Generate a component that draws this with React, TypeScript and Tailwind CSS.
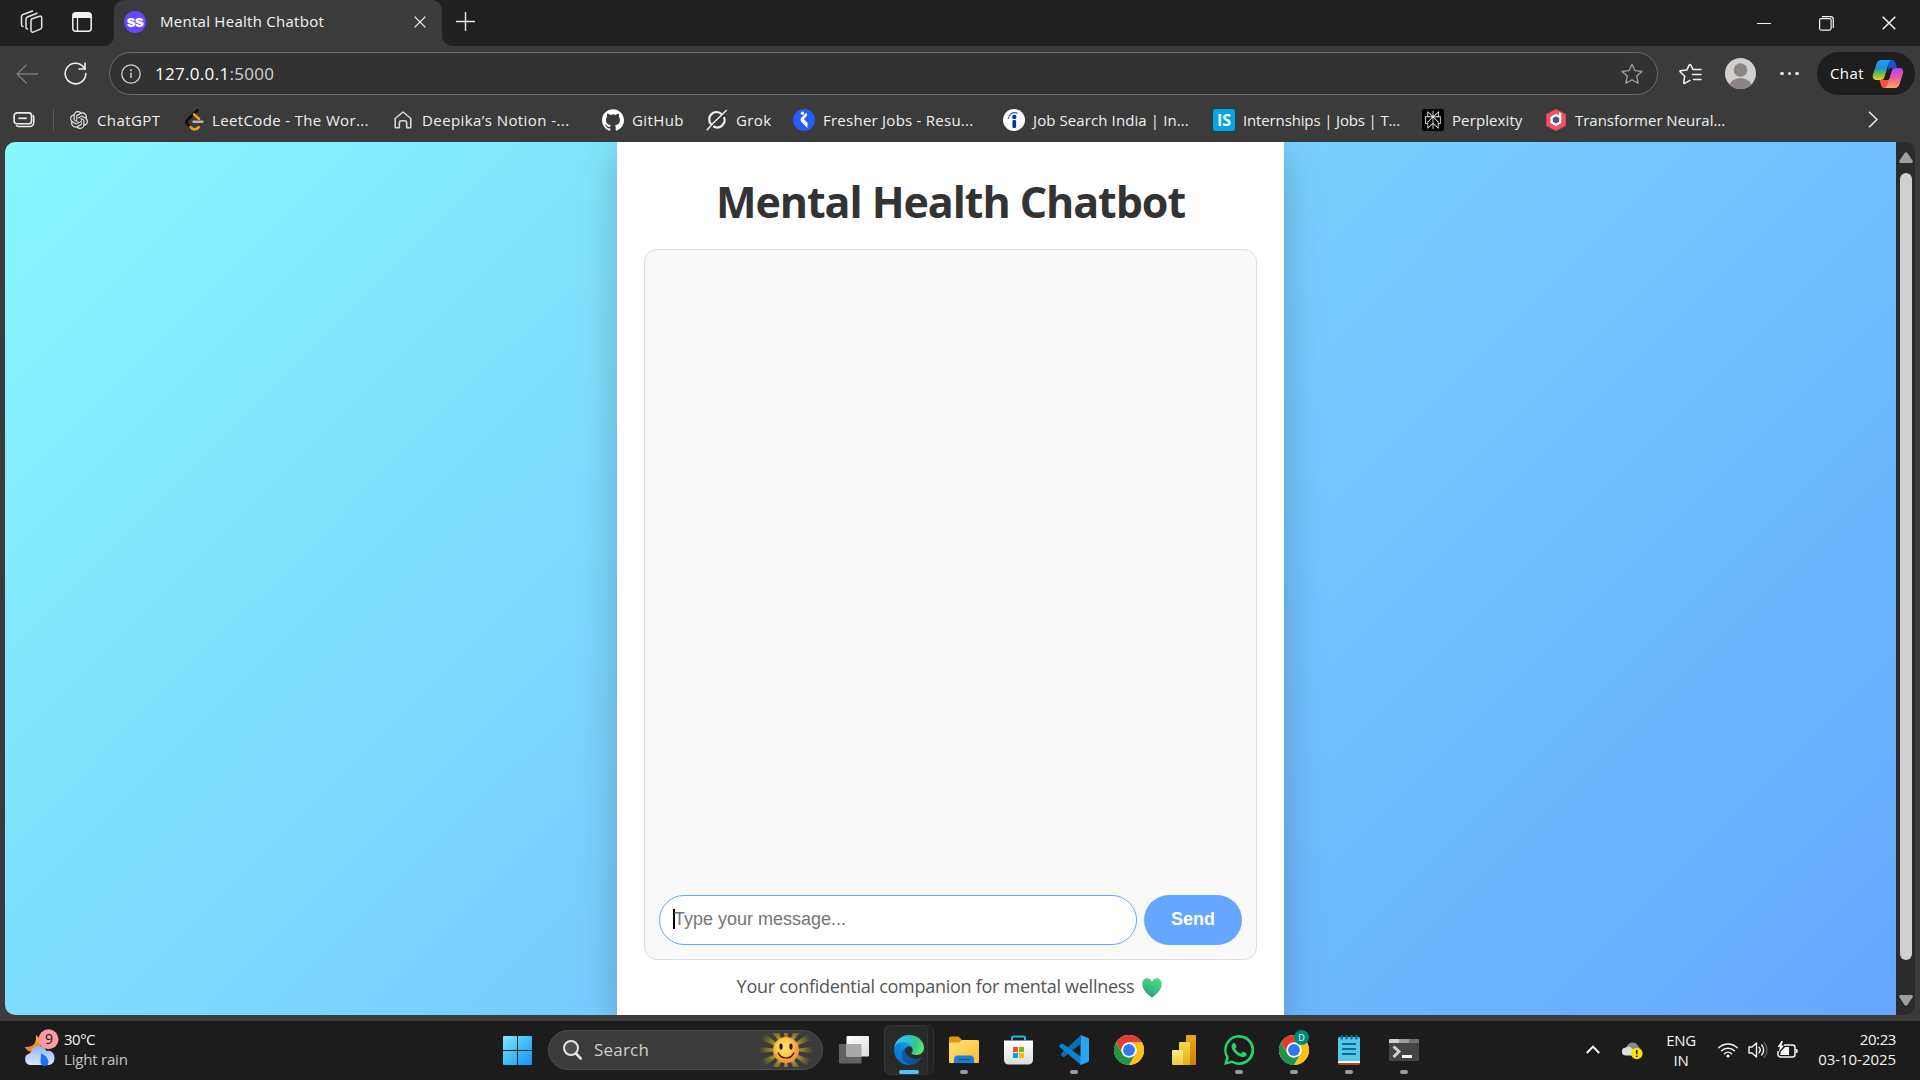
import React from "react";
import { SiOpenai, SiGithub, SiPerplexity } from "react-icons/si";

/* ---------- browser icons ---------- */

const WorkspacesIcon = () => (
  <svg width="24" height="24" viewBox="0 0 24 24" fill="none" stroke="#e6e6e6" strokeWidth="1.5" strokeLinejoin="round" strokeLinecap="round">
    <path d="M11.500 9 19.500 6.200a1.600 1.600 0 0 1 2.200 1.500v9.600a2 2 0 0 1-1.300 1.800l-7.200 3a1.600 1.600 0 0 1-2.200-1.500V11a2 2 0 0 1 .5-2z" />
    <path d="M7.500 19a1.800 1.800 0 0 1-1.500-1.800V9a2.200 2.200 0 0 1 1.500-2L17 3.200" />
    <path d="M3 16.500a1.800 1.800 0 0 1-1.500-1.800V6.500a2.200 2.200 0 0 1 1.500-2L12.500 1" />
  </svg>
);

const VerticalTabsIcon = () => (
  <svg width="20" height="20" viewBox="0 0 20 20" fill="none">
    <rect x=".8" y=".8" width="18.400" height="18.400" rx="3" stroke="#f2f2f2" strokeWidth="1.500" />
    <path d="M1 4a3 3 0 0 1 3-3h12a3 3 0 0 1 3 3v2H1z" fill="#f2f2f2" />
    <path d="M5.500 6v13" stroke="#f2f2f2" strokeWidth="1.300" />
  </svg>
);

const CloseIcon = ({ size }: { size: number }) => (
  <svg width={size} height={size} viewBox="0 0 14 14" fill="none" stroke="#f2f2f2" strokeWidth="1.500">
    <path d="M.7.7l12.600 12.600M13.300.7.7 13.300" />
  </svg>
);

const PlusIcon = () => (
  <svg width="19" height="19" viewBox="0 0 19 19" stroke="#e8e8e8" strokeWidth="1.400">
    <path d="M9.500 0v19M0 9.500h19" />
  </svg>
);

const RestoreIcon = () => (
  <svg width="15" height="15" viewBox="0 0 15 15" fill="none" stroke="#f2f2f2" strokeWidth="1.200">
    <rect x=".6" y="2.600" width="11.500" height="11.500" rx="1.500" />
    <path d="M3 .7h8.500a2.800 2.800 0 0 1 2.800 2.800V12" />
  </svg>
);

const BackIcon = () => (
  <svg width="22" height="20" viewBox="0 0 22 20" fill="none" stroke="#7a7a7a" strokeWidth="1.500">
    <path d="M22 10H1M10.500.7 1 10l9.500 9.300" />
  </svg>
);

const ReloadIcon = () => (
  <svg width="23" height="23" viewBox="0 0 23 23" fill="none" stroke="#f0f0f0" strokeWidth="1.600" strokeLinecap="round" strokeLinejoin="round">
    <path d="M21.800 11.500A10.300 10.300 0 1 1 19.700 5.300L21 7" />
    <path d="M21 1v6h-6" />
  </svg>
);

const InfoIcon = () => (
  <svg width="20" height="20" viewBox="0 0 20 20" fill="none" stroke="#d0d0d0">
    <circle cx="10" cy="10" r="9.200" strokeWidth="1.300" />
    <path d="M10 8.800v5.200" strokeWidth="1.500" />
    <circle cx="10" cy="6.200" r="1" fill="#d0d0d0" stroke="none" />
  </svg>
);

const StarIcon = () => (
  <svg width="22" height="22" viewBox="0 0 22 22" fill="none" stroke="#a0a0a0" strokeWidth="1.300" strokeLinejoin="round">
    <path d="M11 1.200l2.900 6.400 7 .8-5.200 4.700 1.400 7.100-6.100-3.500-6.100 3.500 1.400-7.100L1.100 8.400l7-.8z" />
  </svg>
);

const FavoritesIcon = () => (
  <svg width="23" height="22" viewBox="0 0 23 22" fill="none" stroke="#f2f2f2" strokeWidth="1.500" strokeLinejoin="round" strokeLinecap="round">
    <path d="M14 6.500 11.700 1.900a.8.8 0 0 0-1.400 0L7.900 6.900l-6.500.9a.6.6 0 0 0-.3 1L5.700 13.200 4.700 19.700a.7.7 0 0 0 1 .7l5.300-3" />
    <path d="M14.500 6.500h7.500M13.500 11.500h8.500M14.500 16.500h7.500" />
  </svg>
);

const AvatarIcon = () => (
  <svg width="31" height="31" viewBox="0 0 31 31">
    <clipPath id="avatarClip"><circle cx="15.500" cy="15.500" r="15.500" /></clipPath>
    <g clipPath="url(#avatarClip)">
      <rect width="31" height="31" fill="#d2d0ce" />
      <circle cx="15.500" cy="12" r="6.800" fill="#8a8582" />
      <ellipse cx="15.500" cy="29" rx="11.500" ry="9" fill="#8a8582" />
    </g>
  </svg>
);

const CopilotIcon = () => (
  <svg width="32" height="30" viewBox="0 0 32 30">
    <defs>
      <linearGradient id="cpA" x1="0" y1="0" x2="0" y2="1">
        <stop offset="0" stopColor="#1fa0f5" /><stop offset=".4" stopColor="#1d8fd8" /><stop offset=".7" stopColor="#6cbf4a" /><stop offset="1" stopColor="#f7c81e" />
      </linearGradient>
      <linearGradient id="cpB" x1="0" y1="0" x2="0" y2="1">
        <stop offset="0" stopColor="#a14be8" /><stop offset=".5" stopColor="#ee5a9b" /><stop offset="1" stopColor="#ffa95e" />
      </linearGradient>
    </defs>
    <path d="M16 1h4.500c1.700 0 2.500 1.200 3 3l1.500 5h-5c-2 0-3 1-3.600 3z" fill="#1a4fd0" />
    <path d="M15 29h-3c-1.700 0-2.500-1.200-3-3L7.500 21H13c2 0 3-1 3.500-3l2 2z" fill="#f4553a" />
    <path d="M9 1h11c-2 0-2.800 1.500-3.400 3.500L12.500 18c-.7 2-1.700 3-3.500 3H4.500C1.500 21 0 18.500 1 15.500L4.600 4.500C5.300 2.300 6.700 1 9 1z" fill="url(#cpA)" />
    <path d="M23 29H12c2 0 2.800-1.500 3.400-3.500L19.500 12c.7-2 1.700-3 3.500-3h4.500c3 0 4.500 2.500 3.500 5.500l-3.600 11C26.700 27.700 25.300 29 23 29z" fill="url(#cpB)" />
    <path d="M17 10h3.200l-3 9.800c-.3.800-.9 1.200-1.700 1.200H12c.8-.6 1.200-1.500 1.500-2.500z" fill="#1e1e1e" />
  </svg>
);

const CollectionIcon = () => (
  <svg width="22" height="16" viewBox="0 0 23 17" fill="none" stroke="#ececec">
    <rect x="1" y="1" width="18.500" height="11.500" rx="3" strokeWidth="1.800" />
    <path d="M5.500 6.700h9" strokeWidth="1.800" />
    <path d="M21 3.200c.7.800.9 1.700.9 3v4.300c0 3-1.600 5-5 5H6c-1.500 0-2.300-.5-3-1.300" strokeWidth="1.600" />
  </svg>
);

const LeetCodeIcon = () => (
  <svg width="19" height="22" viewBox="0 0 19 22" fill="none" strokeLinecap="round">
    <path d="M12.300 1.300 2.500 11c-1.300 1.300-1.300 2.800 0 4.100l3 3" stroke="#0a0a0a" strokeWidth="2.600" />
    <path d="M9 5.500l5 4.300M5.500 18c2.300 3 5.800 3.200 8.300.2" stroke="#f5a019" strokeWidth="2.600" />
    <path d="M8.500 12.800h9" stroke="#b5b5b5" strokeWidth="2.400" />
  </svg>
);

const HomeIcon = () => (
  <svg width="18" height="18" viewBox="0 0 18 18" fill="none" stroke="#d6d6d6" strokeWidth="1.600" strokeLinejoin="round">
    <path d="M1.200 7.500 9 1l7.800 6.500V16a.8.8 0 0 1-.8.8h-3.300V12c0-1.500-1-2.300-2.200-2.300h-3C6.300 9.700 5.300 10.500 5.300 12v4.800H2a.8.8 0 0 1-.8-.8z" />
  </svg>
);

const GrokIcon = () => (
  <svg width="22" height="22" viewBox="0 0 22 22" fill="none" stroke="#eeeeee">
    <path d="M15.800 5.200A7.300 7.300 0 0 0 5.300 15.500M18 8.200A7.400 7.400 0 0 1 7.300 17.300" strokeWidth="2.200" />
    <path d="M.8 21.300 7.300 14 20.800 1" strokeWidth="1.400" />
  </svg>
);

const FresherIcon = () => (
  <svg width="22" height="22" viewBox="0 0 22 22">
    <circle cx="11" cy="11" r="11" fill="#275df5" />
    <circle cx="9.500" cy="4.200" r="1.700" fill="#fff" />
    <path d="M13.800 3.500v3.300L11 10.200l3.500 3.500v5.300L9.500 14C7 11.300 7 10 9 8z" fill="#fff" />
  </svg>
);

const IndeedIcon = () => (
  <svg width="22" height="22" viewBox="0 0 22 22">
    <circle cx="11" cy="11" r="11" fill="#fff" />
    <circle cx="11.300" cy="7.900" r="2.200" fill="#003a9b" />
    <rect x="9.400" y="11" width="3.700" height="8" rx="1.300" fill="#003a9b" />
    <path d="M5 10c.7-5 5-7.600 9.800-5.800" fill="none" stroke="#2a5cc0" strokeWidth="1.100" />
  </svg>
);

const InternshalaIcon = () => (
  <span className="flex size-[22px] items-center justify-center rounded-[3px] bg-[#00a5ec] font-['Open_Sans',sans-serif] text-[16px] leading-none font-bold text-white">
    IS
  </span>
);

const PerplexityIcon = () => (
  <span className="flex size-[22px] items-center justify-center rounded-[2px] bg-black">
    <SiPerplexity className="size-[18px] text-[#e0e0e0]" />
  </span>
);

const HexagonIcon = () => (
  <svg width="20" height="22" viewBox="0 0 20 22">
    <path d="M10 0l9.800 5.300v11.400L10 22 .2 16.700V5.300z" fill="#f4505f" />
    <path d="M13 3.200l2.300 1v9.800L10 17.200l-5.500-3.200V8L10 4.800l3 1.600z" fill="#fff" />
    <path d="M10 7.300l3.200 1.800v3.700L10 14.600l-3.200-1.800V9.100z" fill="#3d5a80" />
  </svg>
);

/* ---------- taskbar icons ---------- */

const WeatherIcon = () => (
  <svg width="36" height="38" viewBox="0 0 36 38">
    <defs>
      <linearGradient id="moon" x1="0" y1="0" x2="0" y2="1"><stop offset="0" stopColor="#f0b72c" /><stop offset="1" stopColor="#ee7a1c" /></linearGradient>
      <linearGradient id="cloud" x1="0" y1="0" x2="0" y2="1"><stop offset="0" stopColor="#8fb2f5" /><stop offset="1" stopColor="#dce8fc" /></linearGradient>
    </defs>
    <path d="M12 6c.5 9-3 12.500-11.500 12C3 22 8 25 14 22c4-3 4-12-2-16z" fill="url(#moon)" />
    <path d="M6 36a6 6 0 0 1-1-11.500C6.500 24 7.500 22 8 20.500c2-3.500 5.500-4.500 8.500-3.500 3 .8 5 2.500 6 5 5-1 8 2.500 8 7s-3 7-6.500 7z" fill="url(#cloud)" />
    <path d="M17 24.500c5 2 7.500 5.500 7.500 9 0 2.500-2 3.500-4 3.500S16.500 35.500 16.500 33z" fill="#1677ee" />
    <circle cx="24.500" cy="10.300" r="10" fill="#ff99a4" />
  </svg>
);

const StartIcon = () => (
  <svg width="29" height="29" viewBox="0 0 29 29">
    <defs><linearGradient id="win" x1="0" y1="0" x2="1" y2="1"><stop offset="0" stopColor="#7deafd" /><stop offset=".5" stopColor="#42bdf8" /><stop offset="1" stopColor="#0f96f5" /></linearGradient></defs>
    <path fill="url(#win)" d="M1 0h13v14H0V1a1 1 0 0 1 1-1zM15 0h13a1 1 0 0 1 1 1v13H15zM0 15h14v14H1a1 1 0 0 1-1-1zM15 15h14v13a1 1 0 0 1-1 1H15z" />
  </svg>
);

const SearchIcon = () => (
  <svg width="19" height="20" viewBox="0 0 19 20" fill="none" stroke="#e6e6e6">
    <circle cx="8" cy="8" r="7" strokeWidth="2" fill="#4e4e4e" />
    <path d="M13 13.500l4.700 5" strokeWidth="2.600" strokeLinecap="round" />
  </svg>
);

const SunIcon = () => (
  <svg width="52" height="34" viewBox="0 0 52 34">
    <defs>
      <radialGradient id="sunRays" cx="26" cy="17" r="27" gradientUnits="userSpaceOnUse"><stop offset=".5" stopColor="#a88f2c" /><stop offset="1" stopColor="#a88f2c" stopOpacity="0" /></radialGradient>
      <radialGradient id="sunFace" cx=".45" cy=".4"><stop offset="0" stopColor="#ffe25a" /><stop offset=".6" stopColor="#ffcb4a" /><stop offset="1" stopColor="#f79440" /></radialGradient>
      <clipPath id="sunClip"><rect width="52" height="34" /></clipPath>
    </defs>
    <g clipPath="url(#sunClip)">
      <path fill="url(#sunRays)" d="M26 17L23 -9h6zM26 17L36 -7l6 4zM26 17L47 1l4 6zM26 17L52 14v6zM26 17L51 27l-4 6zM26 17L42 37l-6 4zM26 17L29 43h-6zM26 17L16 41l-6-4zM26 17L5 33l-4-6zM26 17L0 20v-6zM26 17L1 7l4-6zM26 17L10 -3l6-4z" />
      <circle cx="26" cy="17" r="13" fill="url(#sunFace)" />
      <ellipse cx="21" cy="13.500" rx="1.600" ry="3.100" fill="#1c1209" />
      <ellipse cx="31" cy="13.500" rx="1.600" ry="3.100" fill="#1c1209" />
      <path d="M18 19.500c3 7.300 13 7.300 16 0" fill="none" stroke="#1c1209" strokeWidth="1.200" />
    </g>
  </svg>
);

const TaskViewIcon = () => (
  <svg width="30" height="28" viewBox="0 0 30 28">
    <defs><linearGradient id="tv" x1="0" y1="0" x2="1" y2="1"><stop offset="0" stopColor="#fff" /><stop offset="1" stopColor="#dedede" /></linearGradient></defs>
    <rect x="0" y="8" width="22.500" height="19.500" rx="1" fill="#626262" />
    <rect x="7.500" y="0" width="22.500" height="20.500" rx="1" fill="url(#tv)" />
    <path d="M7.500 8h15v12.500h-15z" fill="#a9a9a9" />
  </svg>
);

const EdgeIcon = () => (
  <svg width="30" height="30" viewBox="0 0 256 256">
    <defs>
      <linearGradient id="eg1" x1="63" y1="177" x2="241" y2="177" gradientUnits="userSpaceOnUse"><stop offset="0" stopColor="#0c59a4" /><stop offset="1" stopColor="#114a8b" /></linearGradient>
      <linearGradient id="eg2" x1="157" y1="100" x2="46" y2="221" gradientUnits="userSpaceOnUse"><stop offset="0" stopColor="#1b9de2" /><stop offset=".16" stopColor="#1595df" /><stop offset=".67" stopColor="#0680d7" /><stop offset="1" stopColor="#0078d4" /></linearGradient>
      <radialGradient id="eg3" cx="26" cy="46" r="240" gradientUnits="userSpaceOnUse"><stop offset="0" stopColor="#35c1f1" /><stop offset=".35" stopColor="#2cc3d8" /><stop offset=".7" stopColor="#36c98a" /><stop offset="1" stopColor="#66eb6e" /></radialGradient>
    </defs>
    <path d="M231 190.500c-3.400 1.800-6.900 3.400-10.500 4.700a101.700 101.700 0 0 1-35.900 6.500c-47.300 0-88.500-32.500-88.500-74.300 0-11.400 6.400-21.900 16.400-27.300-42.800 1.800-53.800 46.400-53.800 72.500 0 74 68.100 81.400 82.800 81.400 7.900 0 19.800-2.300 27-4.600l1.300-.4a128.300 128.300 0 0 0 66.600-52.800 4 4 0 0 0-5.400-5.700z" fill="url(#eg1)" />
    <path d="M105.700 241.400a79.200 79.200 0 0 1-22.700-21.300 80.700 80.700 0 0 1 29.500-120c3.200-1.500 8.500-4.100 15.600-4a32.400 32.400 0 0 1 25.700 13 31.900 31.900 0 0 1 6.300 18.700c0-.2 24.500-79.600-80-79.600-43.900 0-80 41.700-80 78.200a130.200 130.200 0 0 0 12.100 56 128 128 0 0 0 156.400 67 75.500 75.500 0 0 1-62.800-8z" fill="url(#eg2)" />
    <path d="M152.300 148.900c-.8 1-3.300 2.500-3.300 5.700 0 2.600 1.700 5.100 4.700 7.200 14.400 10 41.500 8.700 41.600 8.700a59.600 59.600 0 0 0 30.300-8.300 61.400 61.400 0 0 0 30.400-52.900c.3-22.400-8-37.300-11.300-43.900C223.500 23.900 177.700 0 128 0A128 128 0 0 0 0 126.200c.5-36.500 36.800-66 80-66 3.500 0 23.500.3 42 10a72.600 72.600 0 0 1 30.900 29.300c6.100 10.600 7.200 24.100 7.200 29.500s-2.700 13.300-7.800 19.900z" fill="url(#eg3)" />
  </svg>
);

const ExplorerIcon = () => (
  <svg width="30" height="28" viewBox="0 0 30 28">
    <defs><linearGradient id="fold" x1="0" y1="0" x2="1" y2="1"><stop offset="0" stopColor="#ffe07a" /><stop offset="1" stopColor="#fcbf2e" /></linearGradient></defs>
    <path d="M0 2a1.500 1.500 0 0 1 1.500-1.500h8L13 4h15a2 2 0 0 1 2 2v4H0z" fill="#dc9a08" />
    <path d="M0 6.500h10L13 4h15.500A1.500 1.500 0 0 1 30 5.500V26a1 1 0 0 1-1 1H1a1 1 0 0 1-1-1z" fill="url(#fold)" />
    <path d="M5 27v-4a3.500 3.500 0 0 1 3.500-3.500h13A3.500 3.500 0 0 1 25 23v4z" fill="#1483d8" />
    <path d="M8.500 23.500h13" stroke="#0b4f8f" strokeWidth="1.200" />
  </svg>
);

const StoreIcon = () => (
  <svg width="29" height="30" viewBox="0 0 29 30">
    <defs><linearGradient id="bag" x1="0" y1="0" x2="0" y2="1"><stop offset="0" stopColor="#fff" /><stop offset="1" stopColor="#dcdcdc" /></linearGradient></defs>
    <path d="M0 5.500h29V25a4.500 4.500 0 0 1-4.500 4.500h-20A4.500 4.500 0 0 1 0 25z" fill="url(#bag)" />
    <path d="M8 6V3a1.500 1.500 0 0 1 1.500-1.500h10A1.500 1.500 0 0 1 21 3v3" fill="none" stroke="#21b3f1" strokeWidth="2" />
    <path d="M9 12h5v5H9z" fill="#f25022" /><path d="M15 12h5v5h-5z" fill="#7fba00" />
    <path d="M9 18h5v5H9z" fill="#00a4ef" /><path d="M15 18h5v5h-5z" fill="#ffb900" />
  </svg>
);

const VSCodeIcon = () => (
  <svg width="30" height="30" viewBox="0 0 30 30">
    <path d="M22 0 3.300 17.300a1.300 1.300 0 0 0 0 2l1.500 1.400c.5.400 1.100.4 1.600.1L22.500 8z" fill="#0f6fb5" transform="translate(-1 1)" />
    <path d="M22 30 .8 12.200a1.300 1.300 0 0 1 0-2l1.500-1.400c.5-.4 1.100-.4 1.600-.1L22.500 22z" fill="#0a84d0" />
    <path d="M21.500 0 29 3a1.700 1.700 0 0 1 1 1.600v20.800a1.700 1.700 0 0 1-1 1.600l-7.500 3z" fill="#27a4f2" />
  </svg>
);

const ChromeIcon = () => (
  <svg width="30" height="30" viewBox="0 0 48 48">
    <circle cx="24" cy="24" r="24" fill="#fff" />
    <path d="M24 12h20.800A24 24 0 0 0 3.200 12l10.400 18A12 12 0 0 1 24 12z" fill="#e33b2e" />
    <path d="M34.400 30 24 48A24 24 0 0 0 44.800 12H24a12 12 0 0 1 10.400 18z" fill="#fbc116" />
    <path d="M13.600 30 3.200 12A24 24 0 0 0 24 48l10.400-18a12 12 0 0 1-20.800 0z" fill="#229342" />
    <circle cx="24" cy="24" r="12" fill="#fff" />
    <circle cx="24" cy="24" r="9.500" fill="#3079f0" />
  </svg>
);

const PowerBIIcon = () => (
  <svg width="24" height="30" viewBox="0 0 24 30">
    <defs>
      <linearGradient id="pb1" x1="0" y1="0" x2="0" y2="1"><stop offset="0" stopColor="#e9ac12" /><stop offset="1" stopColor="#cc7f10" /></linearGradient>
      <linearGradient id="pb2" x1="0" y1="0" x2="0" y2="1"><stop offset="0" stopColor="#f6d751" /><stop offset="1" stopColor="#e6ad10" /></linearGradient>
      <linearGradient id="pb3" x1="0" y1="0" x2="0" y2="1"><stop offset="0" stopColor="#fbe88c" /><stop offset="1" stopColor="#f2c93c" /></linearGradient>
    </defs>
    <rect x="14" width="10" height="30" rx=".8" fill="url(#pb1)" />
    <path d="M7 8a1 1 0 0 1 1-1h9a1 1 0 0 1 1 1v22H7z" fill="url(#pb2)" />
    <path d="M0 16a1 1 0 0 1 1-1h9a1 1 0 0 1 1 1v14H1a1 1 0 0 1-1-1z" fill="url(#pb3)" />
  </svg>
);

const WhatsAppIcon = () => (
  <svg width="30" height="30" viewBox="0 0 24 24" fill="#25d366">
    <path d="M17.472 14.382c-.297-.149-1.758-.867-2.030-.967-.273-.099-.471-.148-.670.150-.197.297-.767.966-.940 1.164-.173.199-.347.223-.644.075-.297-.150-1.255-.463-2.390-1.475-.883-.788-1.480-1.761-1.653-2.059-.173-.297-.018-.458.130-.606.134-.133.298-.347.446-.520.149-.174.198-.298.298-.497.099-.198.050-.371-.025-.520-.075-.149-.669-1.612-.916-2.207-.242-.579-.487-.500-.669-.510-.173-.008-.371-.010-.570-.010-.198 0-.520.074-.792.372-.272.297-1.040 1.016-1.040 2.479 0 1.462 1.065 2.875 1.213 3.074.149.198 2.096 3.200 5.077 4.487.709.306 1.262.489 1.694.625.712.227 1.360.195 1.871.118.571-.085 1.758-.719 2.006-1.413.248-.694.248-1.289.173-1.413-.074-.124-.272-.198-.570-.347" />
    <path fillRule="evenodd" d="M12 0A12 12 0 0 0 1.700 18L0 24l6.200-1.600A12 12 0 1 0 12 0zm0 2.100a9.900 9.900 0 1 1-5.400 18.200l-3.700 1 1-3.600A9.900 9.900 0 0 1 12 2.100z" />
  </svg>
);

const NotepadIcon = () => (
  <svg width="22" height="30" viewBox="0 0 22 30">
    <path d="M0 26h22v2.500a1.500 1.500 0 0 1-1.500 1.500h-19A1.500 1.500 0 0 1 0 28.500z" fill="#a4510f" />
    <path d="M0 25h22v3H0z" fill="#f4f4f4" />
    <path d="M0 3.500A1.500 1.500 0 0 1 1.500 2h19A1.500 1.500 0 0 1 22 3.500V26H0z" fill="#55c8ea" />
    <path d="M4 9h14M4 14h14M4 19h14" stroke="#0d6a94" strokeWidth="1.800" />
    <g fill="#126f97"><rect x="2.500" width="2.500" height="4.500" rx="1.200" /><rect x="7.300" width="2.500" height="4.500" rx="1.200" /><rect x="12.200" width="2.500" height="4.500" rx="1.200" /><rect x="17" width="2.500" height="4.500" rx="1.200" /></g>
  </svg>
);

const TerminalIcon = () => (
  <svg width="30" height="22" viewBox="0 0 30 22">
    <rect width="30" height="22" rx="1.500" fill="#454545" />
    <path d="M1 0h9v4H0V1a1 1 0 0 1 1-1z" fill="#d0d0d0" /><path d="M10 0h10v4H10z" fill="#9b9b9b" /><path d="M20 0h9a1 1 0 0 1 1 1v3H20z" fill="#707070" />
    <path d="M4.500 7.500l5.500 5-5.500 5.500" fill="none" stroke="#cfcfcf" strokeWidth="3" />
    <path d="M13 16h10v3H13z" fill="#f4f4f4" />
  </svg>
);

const CloudAlertIcon = () => (
  <svg width="21" height="18" viewBox="0 0 21 18">
    <path d="M5 4.500A6 6 0 0 1 15.500 3L19 8v4H6z" fill="#8b8b8b" />
    <path d="M4 13.500a4 4 0 0 1-.3-8C6 3.500 9 5 10.500 7l3 3v3.500z" fill="#dedede" />
    <circle cx="14.800" cy="11.500" r="5.800" fill="#fbe100" />
    <path d="M14.800 8v4.300" stroke="#222" strokeWidth="1.500" /><circle cx="14.800" cy="14.300" r=".9" fill="#222" />
  </svg>
);

const WifiIcon = () => (
  <svg width="20" height="16" viewBox="0 0 20 16" fill="none" stroke="#f4f4f4" strokeWidth="1.500" strokeLinecap="round">
    <path d="M.8 5.800a13 13 0 0 1 18.400 0M3.600 8.800a9 9 0 0 1 12.800 0M6.400 11.700a5.200 5.200 0 0 1 7.200 0" />
    <circle cx="10" cy="14" r="1.600" fill="#f4f4f4" stroke="none" />
  </svg>
);

const SpeakerIcon = () => (
  <svg width="20" height="18" viewBox="0 0 20 18" fill="none" stroke="#f4f4f4" strokeWidth="1.400" strokeLinecap="round" strokeLinejoin="round">
    <path d="M1 6h3l4.500-4v14L4 12H1z" />
    <path d="M11 6.300a4 4 0 0 1 0 5.400M13.700 4a7.500 7.500 0 0 1 0 10" />
    <path d="M16.300 1.800a11 11 0 0 1 0 14.400" stroke="#5c5c5c" />
  </svg>
);

const BatteryIcon = () => (
  <svg width="21" height="18" viewBox="0 0 21 18" fill="none">
    <path d="M7 4h8.500A2.500 2.500 0 0 1 18 6.500v7a2.500 2.500 0 0 1-2.500 2.500h-12A2.500 2.500 0 0 1 1 13.500V10" stroke="#f4f4f4" strokeWidth="1.500" />
    <path d="M19 8h.7a1 1 0 0 1 1 1v2a1 1 0 0 1-1 1H19z" fill="#f4f4f4" />
    <path d="M8 6h4v8H3.500v-3z" fill="#f4f4f4" />
    <path d="M4.500 0 .5 6h2.300L2 11l5-6.500H4.500L6 0z" fill="#f4f4f4" />
  </svg>
);

const ArrowHead = ({ down = false }: { down?: boolean }) => (
  <svg width="14" height="11" viewBox="0 0 14 11" fill="#9f9f9f" className={down ? "rotate-180" : ""}>
    <path d="M5.600.9a1.700 1.700 0 0 1 2.800 0l5 7.600A1.500 1.500 0 0 1 12.200 11H1.800A1.500 1.500 0 0 1 .6 8.500z" />
  </svg>
);

const HeartIcon = () => (
  <svg width="20" height="20" viewBox="0 0 20 18" preserveAspectRatio="none">
    <defs><linearGradient id="heart" x1=".7" y1="0" x2=".3" y2="1"><stop offset="0" stopColor="#4fdc7c" /><stop offset=".6" stopColor="#35b886" /><stop offset="1" stopColor="#3a8f86" /></linearGradient></defs>
    <path d="M10 17.800C5 14.500.3 10.500.3 5.500.3 2.500 2.500.3 5.200.3 7.300.3 9 1.500 10 3.200 11 1.500 12.700.3 14.800.3c2.700 0 4.900 2.200 4.900 5.200 0 5-4.700 9-9.700 12.300z" fill="url(#heart)" />
  </svg>
);

/* ---------- browser chrome ---------- */

const bookmarks = [
  { label: "ChatGPT", icon: <SiOpenai className="size-[18px] text-[#e6e6e6]" />, box: "w-[115px]", text: "ml-[9px] tracking-[0.4px]" },
  { label: "LeetCode - The Wor...", icon: <LeetCodeIcon />, box: "w-[209px]", text: "ml-[8px] tracking-[0.36px]" },
  { label: "Deepika’s Notion -...", icon: <HomeIcon />, box: "w-[208px]", text: "ml-[10px] tracking-[0.42px]" },
  { label: "GitHub", icon: <SiGithub className="size-[22px] text-white" />, box: "w-[104px]", text: "ml-[8px] tracking-[0.4px]" },
  { label: "Grok", icon: <GrokIcon />, box: "w-[87px]", text: "ml-[8px] tracking-[0.4px]" },
  { label: "Fresher Jobs - Resu...", icon: <FresherIcon />, box: "w-[210px]", text: "ml-[8px] tracking-[0.25px]" },
  { label: "Job Search India | In...", icon: <IndeedIcon />, box: "w-[210px]", text: "ml-[8px] tracking-[0.1px]" },
  { label: "Internships | Jobs | T...", icon: <InternshalaIcon />, box: "w-[209px]", text: "ml-[8px] tracking-[-0.14px]" },
  { label: "Perplexity", icon: <PerplexityIcon />, box: "w-[124px]", text: "ml-[8px] tracking-[0.1px]" },
  { label: "Transformer Neural...", icon: <HexagonIcon />, box: "w-[200px]", text: "ml-[9px] tracking-[-0.02px]" },
];

function TitleBar() {
  return (
    <div className="flex h-[46px] shrink-0 bg-[#202020]">
      <div className="flex w-[104px] items-center pb-[2px] pl-[20px]">
        <WorkspacesIcon />
        <span className="ml-[28px] flex"><VerticalTabsIcon /></span>
      </div>
      <div className="flex w-[10px] items-end bg-[#3b3b3b]"><div className="size-full rounded-br-[10px] bg-[#202020]" /></div>
      <div className="flex w-[328px] items-center rounded-t-[10px] bg-[#3b3b3b] pb-[2px] pl-[10px]">
        <span className="flex size-[22px] items-center justify-center rounded-full bg-[#6a45ff] pb-px font-['Inter',sans-serif] text-[15px] leading-none font-black tracking-[-0.6px] text-white">
          ss
        </span>
        <span className="ml-[14px] pb-[2px] text-[15px] leading-5 tracking-[0.27px] text-[#f4f4f4]">Mental Health Chatbot</span>
        <span className="mr-[16px] ml-auto flex"><CloseIcon size={12} /></span>
      </div>
      <div className="flex w-[10px] items-end bg-[#3b3b3b]"><div className="size-full rounded-bl-[10px] bg-[#202020]" /></div>
      <div className="ml-[4px] flex items-center pb-[3px]"><PlusIcon /></div>
      <div className="ml-auto flex items-center pr-[24px]">
        <span className="h-px w-[14px] bg-[#f2f2f2]" />
        <span className="ml-[48px] flex"><RestoreIcon /></span>
        <span className="ml-[48px] flex"><CloseIcon size={14} /></span>
      </div>
    </div>
  );
}

function AddressRow() {
  return (
    <div className="flex h-[55px] shrink-0 items-center pr-[5px] pl-[16px]">
      <BackIcon />
      <span className="ml-[26px] flex"><ReloadIcon /></span>
      <div className="ml-[22px] flex h-[43px] w-[1549px] items-center rounded-full border border-[#6c6c6c] bg-[#323232] pr-[14px] pl-[11px]">
        <InfoIcon />
        <span className="ml-[14px] text-[17px] tracking-[0.3px] text-white">
          127.0.0.1<span className="text-[#d2d2d2]">:5000</span>
        </span>
        <span className="ml-auto flex"><StarIcon /></span>
      </div>
      <span className="ml-[21px] flex"><FavoritesIcon /></span>
      <span className="ml-[23px] flex"><AvatarIcon /></span>
      <div className="ml-[24px] flex gap-[4px]">
        <span className="size-[3.500px] rounded-full bg-[#f0f0f0]" />
        <span className="size-[3.500px] rounded-full bg-[#f0f0f0]" />
        <span className="size-[3.500px] rounded-full bg-[#f0f0f0]" />
      </div>
      <div className="ml-auto flex h-[43px] w-[98px] items-center rounded-full bg-[#1e1e1e] pl-[13px]">
        <span className="w-[42px] text-[15px] tracking-[0.4px] text-white">Chat</span>
        <CopilotIcon />
      </div>
    </div>
  );
}

function BookmarksBar() {
  return (
    <div className="flex h-[41px] shrink-0 items-center pb-[4px] pl-[13px]">
      <CollectionIcon />
      <span className="ml-[18px] h-[22px] w-px bg-[#5c5c5c]" />
      <div className="ml-[16px] flex">
        {bookmarks.map((b) => (
          <div key={b.label} className={`flex h-[26px] shrink-0 items-center ${b.box}`}>
            {b.icon}
            <span className={`text-[15px] leading-5 whitespace-nowrap text-[#f0f0f0] ${b.text}`}>{b.label}</span>
          </div>
        ))}
      </div>
      <svg width="10" height="17" viewBox="0 0 10 17" fill="none" stroke="#f0f0f0" strokeWidth="1.500" className="mr-[42px] ml-auto">
        <path d="M1 .7l8 7.800-8 7.800" />
      </svg>
    </div>
  );
}

/* ---------- page ---------- */

function Page() {
  return (
    <div className="mr-[5px] ml-[5px] flex h-[873px] shrink-0 overflow-hidden rounded-[10px] bg-[#2b2b2b]">
      <div className="flex h-full w-[1891px] justify-center overflow-hidden bg-[linear-gradient(135deg,#89f7fe_0%,#66a6ff_100%)]">
        <main className="flex h-full w-[667px] flex-col bg-white px-[27px] pt-[35px] shadow-[0_10px_38px_rgba(0,0,0,0.22)]">
          <h1 className="h-[50px] text-center text-[43px] leading-[50px] font-bold tracking-[-1.07px] whitespace-nowrap text-[#333]">
            Mental Health Chatbot
          </h1>
          <section className="mt-[22px] flex h-[711px] flex-col justify-end rounded-[13px] border border-[#ddd] bg-[#f9f9f9] px-[14px] pb-[14px]">
            <div className="flex h-[50px] gap-[7px] font-['Liberation_Sans',Arial,sans-serif] text-[18px]">
              <div className="flex flex-1 items-center rounded-[25px] border border-[#66a6ff] bg-white pb-[2px] pl-[13px] text-[#757575]">
                <span className="mr-[-1px] h-[20px] w-[2px] bg-black" />
                Type your message...
              </div>
              <button className="w-[98px] rounded-[25px] bg-[#66a6ff] pb-[2px] font-bold text-white">Send</button>
            </div>
          </section>
          <p className="mt-[13px] mr-[2px] flex h-[26px] items-center justify-center gap-[8px] text-[18px] leading-[26px] tracking-[-0.27px] whitespace-nowrap text-[#555]">
            Your confidential companion for mental wellness
            <span className="flex pt-[3px]"><HeartIcon /></span>
          </p>
        </main>
      </div>
      <div className="flex w-[19px] flex-col items-center pt-[10px] pb-[9px]">
        <ArrowHead />
        <div className="mt-[10px] h-[787px] w-[12px] rounded-full bg-[#d0d0d0]" />
        <span className="mt-auto"><ArrowHead down /></span>
      </div>
    </div>
  );
}

/* ---------- taskbar ---------- */

const apps = [
  { name: "Explorer", icon: <ExplorerIcon />, running: true },
  { name: "Store", icon: <StoreIcon />, running: false },
  { name: "VS Code", icon: <VSCodeIcon />, running: true },
  { name: "Chrome", icon: <ChromeIcon />, running: false },
  { name: "Power BI", icon: <PowerBIIcon />, running: false },
  { name: "WhatsApp", icon: <WhatsAppIcon />, running: true },
  { name: "Chrome profile", icon: <ChromeIcon />, running: true, badge: "D" },
  { name: "Notepad", icon: <NotepadIcon />, running: true },
  { name: "Terminal", icon: <TerminalIcon />, running: true },
];

function Taskbar() {
  return (
    <div className="flex h-[59px] shrink-0 items-center bg-[#1c1c1c] pb-px text-[15px] text-[#f4f4f4]">
      <div className="flex w-[503px] items-center pb-[2px] pl-[24px]">
        <div className="relative mt-[-3px]">
          <WeatherIcon />
          <span className="absolute top-[-1px] right-[7px] text-[14px] leading-[22px] text-[#1c1c1c]">9</span>
        </div>
        <div className="ml-[4px] leading-5">
          <div className="tracking-[-0.5px]">30°C</div>
          <div className="tracking-[-0.2px] text-[#c4c4c4]">Light rain</div>
        </div>
      </div>
      <StartIcon />
      <div className="ml-[16px] flex h-[40px] w-[275px] items-center rounded-full border border-[#4e4e4e] bg-[#3b3b3b] pl-[14px]">
        <SearchIcon />
        <span className="ml-[12px] text-[17px] tracking-[0.2px] text-[#cfcfcf]">Search</span>
        <span className="mr-[10px] ml-auto flex"><SunIcon /></span>
      </div>
      <span className="ml-[16px] flex pb-px"><TaskViewIcon /></span>
      <div className="relative ml-[15px] flex h-[50px] w-[50px] items-center justify-center">
        <span className="absolute inset-y-0 right-0 w-[14px] rounded-r-[6px] border border-[#303030] bg-[#222222]" />
        <span className="absolute inset-y-0 left-0 w-[44px] rounded-[6px] border border-[#363636] bg-[#2a2a2a]" />
        <span className="relative"><EdgeIcon /></span>
        <span className="absolute bottom-[1px] left-[15px] h-[4px] w-[20px] rounded-full bg-[#4cc2ff]" />
      </div>
      <div className="ml-[2px] flex">
        {apps.map((a) => (
          <div key={a.name} className="relative flex h-[50px] w-[55px] items-center justify-center">
            {a.icon}
            {a.badge && (
              <span className="absolute top-[5px] right-[12px] flex size-[15px] items-center justify-center rounded-full bg-[#00897b] text-[9px] leading-none text-white">
                {a.badge}
              </span>
            )}
            {a.running && <span className="absolute bottom-[1px] left-[23.500px] h-[4px] w-[8px] rounded-full bg-[#9a9a9a]" />}
          </div>
        ))}
      </div>
      <div className="ml-auto flex items-center pr-[25px] pb-px">
        <svg width="14" height="9" viewBox="0 0 14 9" fill="none" stroke="#f4f4f4" strokeWidth="2"><path d="M.8 8 7 1.600 13.200 8" /></svg>
        <span className="ml-[22px] flex pt-[2px]"><CloudAlertIcon /></span>
        <div className="ml-[20px] w-[36px] text-center leading-5 tracking-[-0.3px]">
          <div>ENG</div>
          <div>IN</div>
        </div>
        <span className="ml-[19px] flex"><WifiIcon /></span>
        <span className="ml-[10px] flex"><SpeakerIcon /></span>
        <span className="ml-[9px] flex"><BatteryIcon /></span>
        <div className="mr-[-1px] w-[98px] pb-px text-right leading-5">
          <div className="tracking-[-0.4px]">20:23</div>
          <div className="tracking-[-0.05px]">03-10-2025</div>
        </div>
      </div>
    </div>
  );
}

export default function App() {
  return (
    <div className="flex h-[1080px] w-[1920px] flex-col overflow-hidden bg-[#3b3b3b] font-['Open_Sans',sans-serif]">
      <TitleBar />
      <AddressRow />
      <BookmarksBar />
      <Page />
      <div className="h-[6px] shrink-0 bg-[#3b3b3b]" />
      <Taskbar />
    </div>
  );
}
